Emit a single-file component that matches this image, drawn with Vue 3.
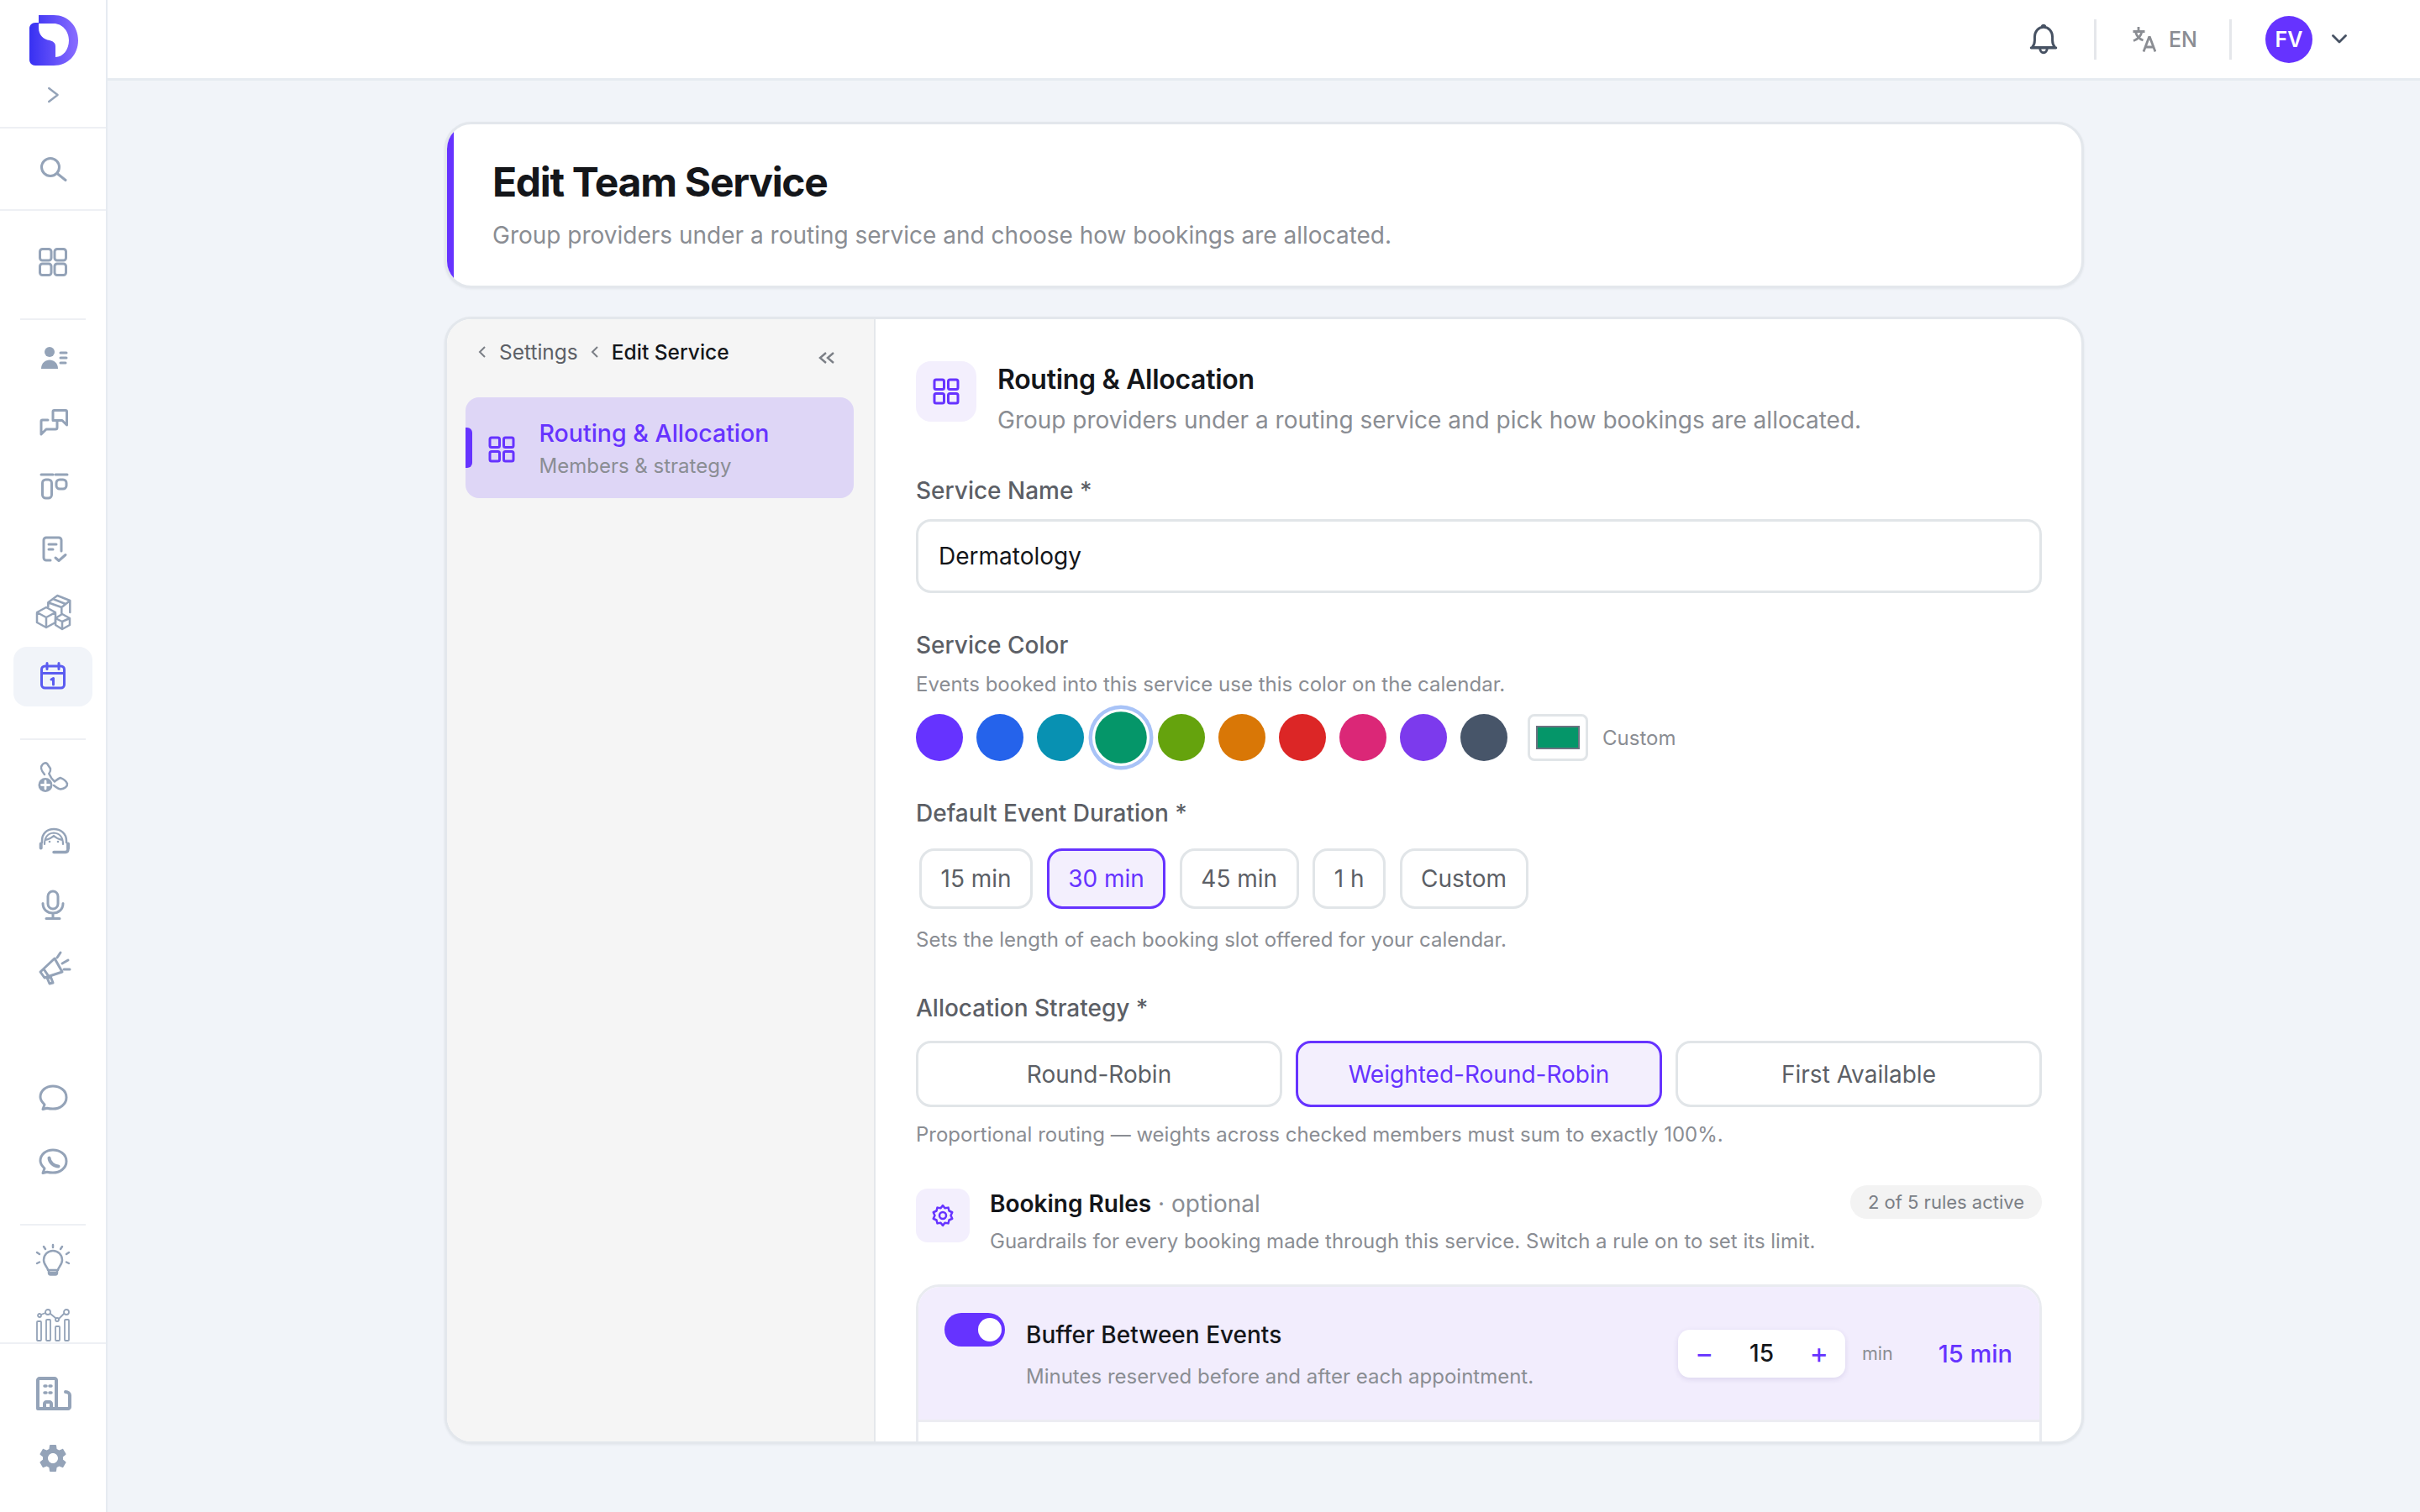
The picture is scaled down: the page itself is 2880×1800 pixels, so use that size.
<script setup>
const swatches = [
  { color: '#6633ff' }, { color: '#2563eb' }, { color: '#0891b2' },
  { color: '#059669', selected: true }, { color: '#65a30d' }, { color: '#d97706' },
  { color: '#dc2626' }, { color: '#db2777' }, { color: '#7c3aed' }, { color: '#475569' }
]
const durations = [
  { label: '15 min' }, { label: '30 min', active: true }, { label: '45 min' },
  { label: '1 h' }, { label: 'Custom' }
]
const strategies = [
  { label: 'Round-Robin' }, { label: 'Weighted-Round-Robin', active: true }, { label: 'First Available' }
]
</script>

<template>
  <div class="app">
    <aside class="rail">
      <div class="rail-brand">
        <svg class="logo" viewBox="35 18 58 60" width="58" height="60">
          <defs>
            <linearGradient id="lg" x1="0" y1="0" x2="1" y2="0">
              <stop offset="0" stop-color="#3730f2" />
              <stop offset="1" stop-color="#8a6dff" />
            </linearGradient>
          </defs>
          <path fill="url(#lg)" fill-rule="evenodd" d="M46 18H64C81 18 93 31 93 48C93 65 81 78 64 78H42C38 78 35 75 35 71V34C35 30 38 27 42 27H46ZM46 28V33C46 42 52 47 59 48C63 49 66 51 66 55V68C75 68 82 59 82 48C82 37 74 28 64 28Z" />
        </svg>
        <svg class="ico chev" viewBox="0 0 40 40"><path d="M14 10l13 10-13 10" /></svg>
      </div>
      <div class="rail-search">
        <svg class="ico" viewBox="0 0 40 40"><circle cx="17" cy="18" r="10.5" /><path d="M25 25.500l10 8" /></svg>
      </div>
      <nav class="rail-nav">
        <div class="rail-item first">
          <svg class="ico" viewBox="0 0 40 40"><rect x="4.500" y="4.500" width="13.500" height="13.500" rx="3" /><rect x="22" y="4.500" width="13.500" height="13.500" rx="3" /><rect x="4.500" y="22" width="13.500" height="13.500" rx="3" /><rect x="22" y="22" width="13.500" height="13.500" rx="3" /></svg>
        </div>
        <div class="rail-sep sep-a"></div>
        <div class="rail-item">
          <svg class="ico" viewBox="0 0 40 40"><circle class="solid" cx="16" cy="13" r="6" /><path class="solid" d="M6 33c0-7 5-10.500 10-10.500S26 26 26 33z" /><path d="M29 14h7M29 20h7M29 26h6" /></svg>
        </div>
        <div class="rail-item">
          <svg class="ico" viewBox="0 0 40 40"><path d="M20 18V8c0-1 .5-1.500 1.500-1.500H35c1 0 1.500.5 1.500 1.500v16L31 18.500H20" /><path d="M25 19v8c0 1.500-.8 2-2 2H12l-6 6V19.500c0-1 .5-1.500 1.500-1.500H14" /></svg>
        </div>
        <div class="rail-item">
          <svg class="ico" viewBox="0 0 40 40"><path d="M6 7h14M23 7h14" /><rect x="7.500" y="13" width="11" height="22" rx="4" /><rect x="24" y="13" width="12" height="11" rx="4" /></svg>
        </div>
        <div class="rail-item">
          <svg class="ico" viewBox="0 0 40 40"><path d="M17 33h-5a3 3 0 0 1-3-3V9a3 3 0 0 1 3-3h15a3 3 0 0 1 3 3v13" /><path d="M15 14h9M15 20h5M23 30l4 3.500 8-7" /></svg>
        </div>
        <div class="rail-item">
          <svg class="ico thin" viewBox="0 0 40 40"><path d="M12 13l11 6v12l-11 6-11-6V19zM1 19l11 6 11-6M12 25v12" /><path d="M31 21l9 5v8l-9 5-8-5v-8zM23 26l8 4 9-4M31 30v9" /><path d="M14.300 12.300V7.300L25.300-1l15 6-10 8-16-5.700M40.300 5v14M30.300 13v7M20 3l15 6" /></svg>
        </div>
        <div class="rail-item active">
          <svg class="ico" viewBox="0 0 40 40"><rect x="6.500" y="7" width="27" height="26" rx="4" /><path d="M6.500 15.500h27M13 3.500v7M27 3.500v7M18 23l2.500-1.500V29" /></svg>
        </div>
        <div class="rail-sep sep-b"></div>
        <div class="rail-item">
          <svg class="ico thin" viewBox="0 0 40 40"><path d="M10 17C6 12 5 8 7 6c1-2 4-3.500 6-2l4 6c.5 3-1 5-1.700 6 1.700 4 3.700 7 6.700 9.500 2-1.500 4-3.500 6.700-4.500 3.300 1 7.300 4 8.300 7 .5 3-3 6-8 6.500-3 0-5-2.500-8-4.500" /><circle class="solid" cx="11" cy="29.500" r="8.500" /><path class="plus" d="M11 25v9M6.500 29.500h9" /></svg>
        </div>
        <div class="rail-item">
          <svg class="ico thin" viewBox="0 0 40 40"><path d="M7 22v-2C7 11 13 6 21 6s15 5 15 14v2" /><path class="fine" d="M10 24c0-8 4-13 11-13.500C28 11 32 16 32 24M11 19c5-1 8-3 10-5 2 2 5 4 10 5" /><path class="solid" d="M3.700 23.500a2 2 0 0 1 4 0v5a2 2 0 0 1-4 0zM36 23.500a2 2 0 0 1 4 0v5a2 2 0 0 1-4 0z" /><circle class="solid" cx="16" cy="21" r="1.300" /><circle class="solid" cx="26" cy="21" r="1.300" /><path class="heavy" d="M38 29c0 3-1 4.500-3 4.500H21" /></svg>
        </div>
        <div class="rail-item">
          <svg class="ico" viewBox="0 0 40 40"><rect x="14" y="4" width="12" height="21" rx="6" /><path d="M8 18.500c0 7 5 11.500 12 11.500s12-4.500 12-11.500M20 30v6M12 36.500h16" /></svg>
        </div>
        <div class="rail-item">
          <svg class="ico" viewBox="0 0 40 40"><path d="M5 24L22 8l9 16-21 7zM10 22l6 9M13 31l3 7 4-1-3-8M25 7l4-6M31 14l7-4M33 21h7" /></svg>
        </div>
        <div class="rail-spacer"></div>
        <div class="rail-item">
          <svg class="ico" viewBox="0 0 40 40"><path d="M8 33.500l2-5.500C7.500 25.500 5 23 5 19c0-8 7-13 15-13s16 5 16 13.500S28 33 20 33c-2.500 0-5-.3-7-.8z" /></svg>
        </div>
        <div class="rail-item">
          <svg class="ico" viewBox="0 0 40 40"><path d="M8 33.500l2-5.500C7.500 25.500 5 23 5 19c0-8 7-13 15-13s16 5 16 13.500S28 33 20 33c-2.500 0-5-.3-7-.8z" /><path class="wa" d="M15.500 15.500C16 21 21 25.500 26.500 25.500" /></svg>
        </div>
        <div class="rail-sep sep-c"></div>
        <div class="rail-item">
          <svg class="ico thin" viewBox="0 0 40 40"><path d="M14 30c0-3-5-6-5-12a11 11 0 0 1 22 0c0 6-5 9-5 12zM15 30v3c0 1.500 1 2.500 2 2.500h6c1 0 2-1 2-2.500v-3M15 33h10" /><path d="M20 0v3M9 2l2 3M31 2l-2 3M1 9l3 2M39 9l-3 2M1 22l3-1.500M39 22l-3-1.500" /></svg>
        </div>
        <div class="rail-item">
          <svg class="ico hair" viewBox="0 0 40 40"><rect x="1" y="15" width="5" height="23" rx="1" /><rect x="12" y="13" width="5" height="25" rx="1" /><rect x="23" y="21" width="5" height="17" rx="1" /><rect x="34" y="13" width="5" height="25" rx="1" /><circle cx="4" cy="8" r="2" /><circle cx="14" cy="4" r="3" /><circle cx="25" cy="13" r="2" /><circle cx="36" cy="4" r="3" /><path d="M6 7l5-2M17 6l6 5M27 12l6-6" /></svg>
        </div>
      </nav>
      <div class="rail-foot">
        <div class="rail-item">
          <svg class="ico bold" viewBox="0 0 40 40"><path d="M24 37H2V3c0-1 1-2 2-2h18c1 0 2 1 2 2z" /><path d="M24 37h14c1 0 2-1 2-2V21c0-2-2-4-5-4" /><path d="M10 37v-6c0-1 1-2 2-2h4c1 0 2 1 2 2v6" /><path class="dots" d="M10 10h2M16 10h2M10 18h2M16 18h2" /></svg>
        </div>
        <div class="rail-item">
          <svg class="ico gear" viewBox="0 0 24 24"><path d="M19.140 12.940c.04-.3.06-.61.06-.94 0-.32-.02-.64-.07-.94l2.030-1.580c.18-.14.23-.41.12-.61l-1.920-3.320c-.12-.22-.37-.29-.59-.22l-2.390.96c-.5-.38-1.030-.7-1.620-.94l-.36-2.540c-.04-.24-.24-.41-.48-.41h-3.840c-.24 0-.43.17-.47.41l-.36 2.540c-.59.24-1.130.57-1.620.94l-2.390-.96c-.22-.08-.47 0-.59.22L2.740 8.870c-.12.21-.08.47.12.61l2.030 1.580c-.05.3-.09.63-.09.94s.02.64.07.94l-2.030 1.580c-.18.14-.23.41-.12.61l1.920 3.320c.12.22.37.29.59.22l2.390-.96c.5.38 1.030.7 1.620.94l.36 2.540c.05.24.24.41.48.41h3.840c.24 0 .44-.17.47-.41l.36-2.540c.59-.24 1.130-.56 1.620-.94l2.390.96c.22.08.47 0 .59-.22l1.920-3.320c.12-.22.07-.47-.12-.61l-2.010-1.580zM12 15.600c-1.980 0-3.600-1.620-3.600-3.600s1.620-3.600 3.600-3.600 3.600 1.620 3.600 3.600-1.620 3.600-3.600 3.600z" /></svg>
        </div>
      </div>
    </aside>

    <div class="main">
      <header class="topbar">
        <svg class="bell" viewBox="0 0 32 36"><path d="M3 27c2-2 3-4 3-8v-4C6 9 10 4 16 4s10 5 10 11v4c0 4 1 6 3 8zM2 27.500h28M12 28c0 3 2 5 4 5s4-2 4-5M14 4c0-1 1-2 2-2s2 1 2 2" /></svg>
        <span class="vline v1"></span>
        <span class="lang">
          <svg class="lang-ico" viewBox="0 0 28 30"><path d="M.5 5.500h14M7 0v5.500M3.500 5.500c1 5 4.500 9 9 10.500M11 5.500c-1 5-4.500 9-10 11" /><path d="M13 29.500l6.500-17h1l6.500 17M15.500 24h10" /></svg>
          <span>EN</span>
        </span>
        <span class="vline v2"></span>
        <span class="avatar">FV</span>
        <svg class="caret" viewBox="0 0 18 11"><path d="M1.500 1.500L9 9l7.500-7.500" /></svg>
      </header>

      <div class="content">
        <div class="column">
          <section class="hero">
            <div class="hero-accent"></div>
            <div class="hero-body">
              <h1>Edit Team Service</h1>
              <p>Group providers under a routing service and choose how bookings are allocated.</p>
            </div>
          </section>

          <section class="panel">
            <aside class="side">
              <div class="crumbs">
                <svg class="crumb-ico" viewBox="0 0 10 16"><path d="M8 2L2 8l6 6" /></svg>
                <span class="crumb">Settings</span>
                <svg class="crumb-ico" viewBox="0 0 10 16"><path d="M8 2L2 8l6 6" /></svg>
                <span class="crumb current">Edit Service</span>
                <svg class="collapse" viewBox="0 0 20 16"><path d="M9 2L2 8l7 6M18 2l-7 6 7 6" /></svg>
              </div>
              <div class="side-item">
                <div class="side-mark"></div>
                <svg class="grid-ico" viewBox="0 0 32 32"><rect x="2" y="2" width="11.500" height="11.500" rx="2" /><rect x="18.500" y="2" width="11.500" height="11.500" rx="2" /><rect x="2" y="18.500" width="11.500" height="11.500" rx="2" /><rect x="18.500" y="18.500" width="11.500" height="11.500" rx="2" /></svg>
                <div class="side-text">
                  <div class="side-title">Routing &amp; Allocation</div>
                  <div class="side-sub">Members &amp; strategy</div>
                </div>
              </div>
            </aside>

            <div class="form">
              <div class="form-head">
                <div class="head-icon">
                  <svg class="grid-ico" viewBox="0 0 32 32"><rect x="2" y="2" width="11.500" height="11.500" rx="2" /><rect x="18.500" y="2" width="11.500" height="11.500" rx="2" /><rect x="2" y="18.500" width="11.500" height="11.500" rx="2" /><rect x="18.500" y="18.500" width="11.500" height="11.500" rx="2" /></svg>
                </div>
                <div class="head-text">
                  <h2>Routing &amp; Allocation</h2>
                  <p>Group providers under a routing service and pick how bookings are allocated.</p>
                </div>
              </div>

              <div class="label l-name">Service Name *</div>
              <div class="input">Dermatology</div>

              <div class="label l-color">Service Color</div>
              <div class="hint h-color">Events booked into this service use this color on the calendar.</div>
              <div class="swatches">
                <span v-for="s in swatches" :key="s.color" class="dot" :class="{ selected: s.selected }" :style="{ background: s.color }"></span>
                <span class="custom-box"><span class="custom-fill"></span></span>
                <span class="custom-label">Custom</span>
              </div>

              <div class="label l-dur">Default Event Duration *</div>
              <div class="durations">
                <span v-for="d in durations" :key="d.label" class="chip" :class="{ on: d.active }">{{ d.label }}</span>
              </div>
              <div class="hint h-dur">Sets the length of each booking slot offered for your calendar.</div>

              <div class="label l-alloc">Allocation Strategy *</div>
              <div class="strategies">
                <span v-for="s in strategies" :key="s.label" class="strategy" :class="{ on: s.active }">{{ s.label }}</span>
              </div>
              <div class="hint h-alloc">Proportional routing — weights across checked members must sum to exactly 100%.</div>

              <div class="rules-head">
                <div class="rules-icon">
                  <svg class="rules-gear" viewBox="0 0 24 24"><path d="M12 2.500l2 2.500 3.200-.5.800 3.100 3 1.400-1.400 3 1.400 3-3 1.400-.8 3.100-3.200-.5-2 2.500-2-2.500-3.200.5-.8-3.100-3-1.400 1.400-3-1.400-3 3-1.400.8-3.100 3.200.5z" /><circle cx="12" cy="12" r="3.200" /></svg>
                </div>
                <div class="rules-text">
                  <div class="rules-title"><b>Booking Rules</b><span> · optional</span></div>
                  <div class="rules-desc">Guardrails for every booking made through this service. Switch a rule on to set its limit.</div>
                </div>
                <span class="pill">2 of 5 rules active</span>
              </div>

              <div class="rule-card">
                <div class="rule-head">
                  <span class="toggle"><span class="knob"></span></span>
                  <div class="rule-text">
                    <div class="rule-title">Buffer Between Events</div>
                    <div class="rule-desc">Minutes reserved before and after each appointment.</div>
                  </div>
                  <div class="stepper"><span class="step">−</span><span class="val">15</span><span class="step">+</span></div>
                  <span class="unit">min</span>
                  <span class="rule-val">15 min</span>
                </div>
              </div>
            </div>
          </section>
        </div>
      </div>
    </div>
  </div>
</template>

<style>
html, body { margin: 0; overflow: hidden; }
</style>

<style scoped>
* { box-sizing: border-box; }
.app {
  width: 2880px; height: 1800px; display: flex; overflow: hidden;
  background: #f1f4f9; font-family: Inter, "Liberation Sans", sans-serif; color: #5c5f66;
}
.rail {
  width: 128px; flex: none; background: #fff; border-right: 2px solid #e6ebf1;
  display: flex; flex-direction: column;
}
.ico { width: 40px; height: 40px; overflow: visible; fill: none; stroke: #94a3b8; stroke-width: 3; stroke-linecap: round; stroke-linejoin: round; }
.ico.thin { stroke-width: 2.500; }
.ico.hair { stroke-width: 1.800; }
.ico.bold { stroke-width: 4; }
.ico .solid { fill: #94a3b8; stroke: none; }
.ico .plus { stroke: #fff; stroke-width: 2.800; }
.ico .dots { stroke-width: 3.500; }
.ico .fine { stroke-width: 2.200; }
.ico .heavy { stroke-width: 3.500; }
.ico .wa { stroke-width: 4; }
.ico.gear { fill: #94a3b8; stroke: none; }
.rail-brand {
  height: 153px; flex: none; padding-top: 18px; border-bottom: 2px solid #eef0f4;
  display: flex; flex-direction: column; align-items: center;
}
.logo { display: block; flex: none; margin-left: 1px; }
.chev { margin-top: 19px; width: 32px; height: 32px; }
.rail-search { height: 98px; flex: none; border-bottom: 2px solid #eef0f4; display: flex; align-items: center; justify-content: center; }
.rail-nav { flex: 1; min-height: 0; overflow: hidden; display: flex; flex-direction: column; align-items: center; padding-top: 25px; }
.rail-item { width: 94px; height: 71px; flex: none; margin-bottom: 5px; border-radius: 16px; display: flex; align-items: center; justify-content: center; }
.rail-item.active { background: #f1f4f9; }
.rail-item.active .ico { stroke: #5b5cf0; }
.rail-sep { width: 78px; height: 2px; flex: none; background: #eef0f4; }
.sep-a { margin: 27px 0 9px; }
.sep-b { margin: 33px 0 8px; }
.sep-c { margin: 34px 0 7px; }
.rail-spacer { height: 78px; flex: none; }
.rail-foot { height: 202px; flex: none; border-top: 2px solid #eef0f4; display: flex; flex-direction: column; align-items: center; padding-top: 24px; }

.main { flex: 1; min-width: 0; display: flex; flex-direction: column; }
.topbar {
  height: 96px; flex: none; background: #fff; border-bottom: 3px solid #e6ebf1;
  display: flex; align-items: center; padding-right: 87px; justify-content: flex-end;
}
.bell { width: 34px; height: 38px; fill: none; stroke: #475263; stroke-width: 2.800; stroke-linecap: round; stroke-linejoin: round; }
.vline { width: 3px; height: 48px; background: #e5e7eb; }
.v1 { margin-left: 43px; }
.v2 { margin-left: 38px; }
.lang { display: flex; align-items: center; gap: 15px; margin-left: 43px; color: #8a8d93; font-size: 25px; font-weight: 500; }
.lang-ico { width: 28px; height: 30px; fill: none; stroke: #8a8d93; stroke-width: 2.800; }
.v2 + .avatar { margin-left: 40px; }
.avatar {
  width: 56px; height: 56px; border-radius: 50%; background: #6633ff; color: #fff;
  display: flex; align-items: center; justify-content: center; font-size: 25px; font-weight: 600;
}
.caret { width: 18px; height: 11px; margin-left: 23px; fill: none; stroke: #475263; stroke-width: 2.800; stroke-linecap: round; stroke-linejoin: round; }

.content { flex: 1; min-height: 0; display: flex; justify-content: center; padding-left: 1px; padding-top: 49px; }
.column { width: 1951px; display: flex; flex-direction: column; }
.hero {
  height: 198px; flex: none; display: flex; overflow: hidden; background: #fff;
  border: 3px solid #e3e7ec; border-radius: 32px; box-shadow: 0 1px 3px rgba(30, 40, 60, .07);
}
.hero-accent { width: 8px; background: #6633ff; flex: none; }
.hero-body { padding: 40px 0 0 46px; }
h1 { margin: 0; font-size: 48px; line-height: 58px; font-weight: 700; color: #14161a; letter-spacing: -1.300px; }
.hero p { margin: 14px 0 0; font-size: 28px; line-height: 40px; color: #8a8d93; }

.panel {
  height: 1342px; flex: none; margin-top: 34px; display: flex; overflow: hidden; background: #fff;
  border: 3px solid #e3e7ec; border-radius: 32px; box-shadow: 0 1px 3px rgba(30, 40, 60, .07);
}
.side { width: 510px; flex: none; background: #f5f5f5; border-right: 2px solid #e5e7eb; padding: 0 24.500px 0 22px; }
.crumbs { height: 93px; display: flex; align-items: center; padding-bottom: 15px; color: #5c5f66; }
.crumb-ico { width: 10px; height: 16px; fill: none; stroke: #7b7f86; stroke-width: 2; margin-left: 15px; }
.crumb { font-size: 24.500px; margin-left: 15px; }
.crumb.current { color: #14161a; font-weight: 500; }
.collapse { width: 20px; height: 16px; fill: none; stroke: #7b7f86; stroke-width: 2.400; margin-left: auto; margin-right: 22px; margin-top: 14px; }
.side-item { height: 120px; background: #ded6f6; border-radius: 16px; display: flex; align-items: center; }
.side-mark { width: 8px; height: 48px; background: #6633ff; border-radius: 0 6px 6px 0; flex: none; }
.grid-ico { width: 32px; height: 32px; fill: none; stroke: #6633ff; stroke-width: 3; flex: none; }
.side-item .grid-ico { margin-left: 19px; margin-top: 4px; }
.side-text { margin-left: 28.500px; padding-top: 2px; }
.side-title { font-size: 28.500px; line-height: 40px; font-weight: 500; color: #6633ff; }
.side-sub { font-size: 24px; line-height: 36px; color: #8a8d93; margin-top: 1px; }

.form { flex: 1; min-width: 0; padding: 50px 47px 0 48px; overflow: hidden; }
.form-head { display: flex; gap: 25px; }
.head-text { padding-top: 2px; }
.head-icon { width: 72px; height: 72px; border-radius: 18px; background: #f3effd; display: flex; align-items: center; justify-content: center; flex: none; }
h2 { margin: 0; font-size: 32px; line-height: 40px; font-weight: 600; color: #14161a; letter-spacing: -0.3px; }
.form-head p { margin: 8px 0 0; font-size: 28px; line-height: 40px; color: #8a8d93; }
.label { font-size: 28px; line-height: 36px; font-weight: 500; color: #5c5f66; }
.l-name { margin-top: 46px; }
.input {
  margin-top: 16px; height: 88px; border: 3px solid #e1e5e8; border-radius: 18px; display: flex; align-items: center;
  padding-left: 24px; font-size: 28px; color: #14161a;
}
.l-color { margin-top: 44px; }
.hint { font-size: 24px; line-height: 30px; color: #8a8d93; }
.h-color { margin-top: 14px; }
.swatches { margin-top: 20px; height: 56px; display: flex; align-items: center; gap: 16px; }
.dot { width: 56px; height: 56px; border-radius: 50%; flex: none; }
.dot.selected { transform: scale(1.1); box-shadow: 0 0 0 3px #fff, 0 0 0 7px #a8c3f7; }
.custom-box { width: 72px; height: 56px; margin-left: 8px; border: 3px solid #e1e5e8; border-radius: 8px; display: flex; align-items: center; justify-content: center; background: #fff; flex: none; }
.custom-fill { width: 52px; height: 28px; background: #059669; border: 2px solid #6b7280; }
.custom-label { font-size: 24px; color: #8a8d93; margin-left: 1px; }
.l-dur { margin-top: 44px; }
.durations { margin-top: 24px; display: flex; gap: 16.500px; padding-left: 4px; }
.chip {
  height: 72px; padding: 0 22.500px; border: 3px solid #e1e5e8; border-radius: 18px; display: flex; align-items: center;
  font-size: 28px; color: #5c5f66; background: #fff;
}
.chip.on { border-color: #6633ff; background: #f3effd; color: #6633ff; }
.h-dur { margin-top: 22px; }
.l-alloc { margin-top: 48px; }
.strategies { margin-top: 21px; display: grid; grid-template-columns: 1fr 1fr 1fr; gap: 16px; }
.strategy {
  height: 79px; border: 3px solid #e1e5e8; border-radius: 18px; display: flex; align-items: center; justify-content: center;
  font-size: 28px; color: #5c5f66; background: #fff;
}
.strategy.on { border-color: #6633ff; background: #f3effd; color: #6633ff; }
.h-alloc { margin-top: 18px; }
.rules-head { margin-top: 47px; display: flex; align-items: flex-start; height: 66px; }
.rules-icon { width: 64px; height: 64px; margin-top: 2px; border-radius: 14px; background: #f3effd; display: flex; align-items: center; justify-content: center; flex: none; }
.rules-gear { width: 30px; height: 30px; fill: none; stroke: #6633ff; stroke-width: 2; stroke-linejoin: round; }
.rules-text { margin-left: 24px; flex: 1; }
.rules-title { font-size: 28px; line-height: 40px; color: #8a8d93; }
.rules-title b { font-weight: 600; color: #14161a; }
.rules-desc { font-size: 24px; line-height: 30px; color: #8a8d93; margin-top: 10px; }
.pill { height: 40px; width: 228px; margin-top: -2px; flex: none; justify-content: center; border-radius: 20px; background: #f3f3f3; display: flex; align-items: center; font-size: 22px; color: #7b7f86; }
.rule-card { margin-top: 50px; height: 400px; border: 3px solid #e9ebf0; border-radius: 28px 28px 0 0; overflow: hidden; }
.rule-head { height: 161px; background: #f2edfd; border-bottom: 3px solid #ececf2; display: flex; align-items: center; padding: 0 32px 0 31px; }
.toggle { width: 72px; height: 40px; background: #6633ff; border-radius: 20px; flex: none; align-self: flex-start; margin-top: 31px; display: flex; align-items: center; justify-content: flex-end; padding-right: 4px; }
.knob { width: 28px; height: 28px; background: #fff; border-radius: 50%; }
.rule-text { margin-left: 25px; margin-top: 4px; flex: 1; }
.rule-title { font-size: 28px; line-height: 36px; font-weight: 500; color: #14161a; }
.rule-desc { font-size: 24px; line-height: 32px; color: #8a8d93; margin-top: 16px; }
.stepper { width: 199px; height: 57px; background: #fff; border-radius: 14px; box-shadow: 0 2px 6px rgba(60,40,120,.12); display: flex; align-items: center; justify-content: space-between; padding: 0 20px; font-size: 28px; flex: none; }
.step { color: #6633ff; font-size: 34px; line-height: 1; }
.val { color: #14161a; font-weight: 500; }
.unit { font-size: 21.500px; color: #8a8d93; margin-left: 20px; }
.rule-val { font-size: 29px; color: #6633ff; font-weight: 500; margin-left: 54px; }
</style>
